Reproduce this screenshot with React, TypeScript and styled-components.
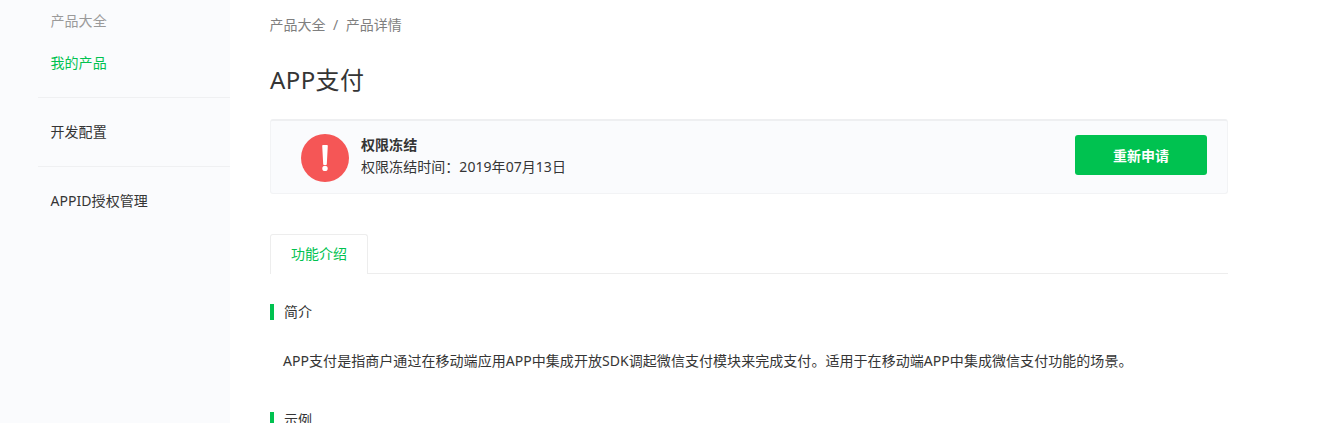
import styled, { createGlobalStyle } from "styled-components";

const GlobalStyle = createGlobalStyle`
  html, body {
    margin: 0;
    padding: 0;
    height: 100%;
    overflow: hidden;
    background: #fff;
  }
  body {
    font-family: "Noto Sans", "Noto Sans CJK SC", sans-serif;
    font-size: 14px;
    color: #353535;
  }
`;

const Page = styled.div`
  display: flex;
  height: 423px;
  overflow: hidden;
`;

const Sidebar = styled.aside`
  width: 230px;
  flex-shrink: 0;
  box-sizing: border-box;
  padding-left: 38px;
  background: #fafbfd;
`;

const NavGroup = styled.div`
  padding: 0 0 17px 12.5px;
  border-bottom: 1px solid #eff0f2;
  &:last-child {
    border-bottom: 0;
  }
`;

const NavItem = styled.div<{ $tone?: "muted" | "active" }>`
  height: 42px;
  line-height: 42px;
  font-size: 14px;
  letter-spacing: 0.05px;
  white-space: nowrap;
  color: ${(props) =>
    props.$tone === "muted" ? "#9a9a9a" : props.$tone === "active" ? "#00c250" : "#353535"};
`;

const FirstGroup = styled(NavGroup)`
  height: 98px;
  box-sizing: border-box;
`;

const SecondGroup = styled(NavGroup)`
  height: 69px;
  box-sizing: border-box;
  padding-top: 13px;
`;

const Main = styled.main`
  width: 958px;
  margin-left: 40px;
  flex-shrink: 0;
`;

const Breadcrumb = styled.div`
  display: flex;
  gap: 7.5px;
  height: 50px;
  line-height: 50px;
  margin-left: -0.5px;
  color: #7f7f7f;
`;

const Title = styled.h1`
  margin: 0;
  height: 69px;
  padding-top: 10px;
  box-sizing: border-box;
  line-height: 40px;
  font-size: 24px;
  font-weight: 400;
  letter-spacing: 0.4px;
  color: #353535;
`;

const Banner = styled.section`
  display: flex;
  align-items: center;
  height: 75px;
  box-sizing: border-box;
  padding: 0 20px 0 30px;
  background: #fafbfd;
  border: 1px solid #f2f3f5;
  border-top: 2px solid #eeeff1;
  border-radius: 3px;
`;

const StatusIcon = styled.svg`
  width: 48px;
  height: 48px;
  flex-shrink: 0;
  margin: 2px 12px 0 0;
`;

const BannerText = styled.div`
  flex: 1;
  margin-bottom: 2px;
  line-height: 22px;
  letter-spacing: 0.05px;
`;

const BannerTitle = styled.div`
  font-weight: 700;
`;

const Button = styled.button`
  width: 132px;
  height: 40px;
  margin-bottom: 4px;
  border: 0;
  border-radius: 3px;
  background: #00c250;
  color: #fff;
  font: inherit;
  font-weight: 700;
`;

const Tabs = styled.div`
  display: flex;
  margin-top: 40px;
  height: 40px;
  box-sizing: border-box;
  border-bottom: 1px solid #ededed;
`;

const Tab = styled.div`
  width: 98px;
  height: 40px;
  box-sizing: border-box;
  text-align: center;
  line-height: 38px;
  color: #00c250;
  background: #fff;
  border: 1px solid #ededed;
  border-bottom: 0;
  border-radius: 3px 3px 0 0;
`;

const SectionTitle = styled.h2<{ $top: number }>`
  margin: ${(props) => props.$top}px 0 0;
  height: 16px;
  padding-left: 10px;
  border-left: 4px solid #00c250;
  line-height: 15px;
  font-size: 14px;
  font-weight: 400;
  color: #353535;
`;

const Paragraph = styled.p`
  margin: 29px 0 0;
  padding-left: 13px;
  line-height: 24px;
  letter-spacing: 0.05px;
  white-space: nowrap;
  color: #353535;
`;

export default function App() {
  return (
    <>
      <GlobalStyle />
      <Page>
        <Sidebar>
          <FirstGroup>
            <NavItem $tone="muted">产品大全</NavItem>
            <NavItem $tone="active">我的产品</NavItem>
          </FirstGroup>
          <SecondGroup>
            <NavItem>开发配置</NavItem>
          </SecondGroup>
          <SecondGroup>
            <NavItem>APPID授权管理</NavItem>
          </SecondGroup>
        </Sidebar>
        <Main>
          <Breadcrumb>
            <span>产品大全</span>
            <span>/</span>
            <span>产品详情</span>
          </Breadcrumb>
          <Title>APP支付</Title>
          <Banner>
            <StatusIcon viewBox="0 0 48 48">
              <circle cx="24" cy="24" r="24" fill="#f55656" />
              <path d="M21.2 11.8a.8.8 0 0 1 .8-.8h4a.8.8 0 0 1 .8.8l-1 18.4a.8.8 0 0 1-.8.8h-2a.8.8 0 0 1-.8-.8z" fill="#fff" />
              <circle cx="24" cy="34.4" r="2.7" fill="#fff" />
            </StatusIcon>
            <BannerText>
              <BannerTitle>权限冻结</BannerTitle>
              <div>权限冻结时间：2019年07月13日</div>
            </BannerText>
            <Button>重新申请</Button>
          </Banner>
          <Tabs>
            <Tab>功能介绍</Tab>
          </Tabs>
          <SectionTitle $top={30}>简介</SectionTitle>
          <Paragraph>
            APP支付是指商户通过在移动端应用APP中集成开放SDK调起微信支付模块来完成支付。适用于在移动端APP中集成微信支付功能的场景。
          </Paragraph>
          <SectionTitle $top={39}>示例</SectionTitle>
        </Main>
      </Page>
    </>
  );
}
